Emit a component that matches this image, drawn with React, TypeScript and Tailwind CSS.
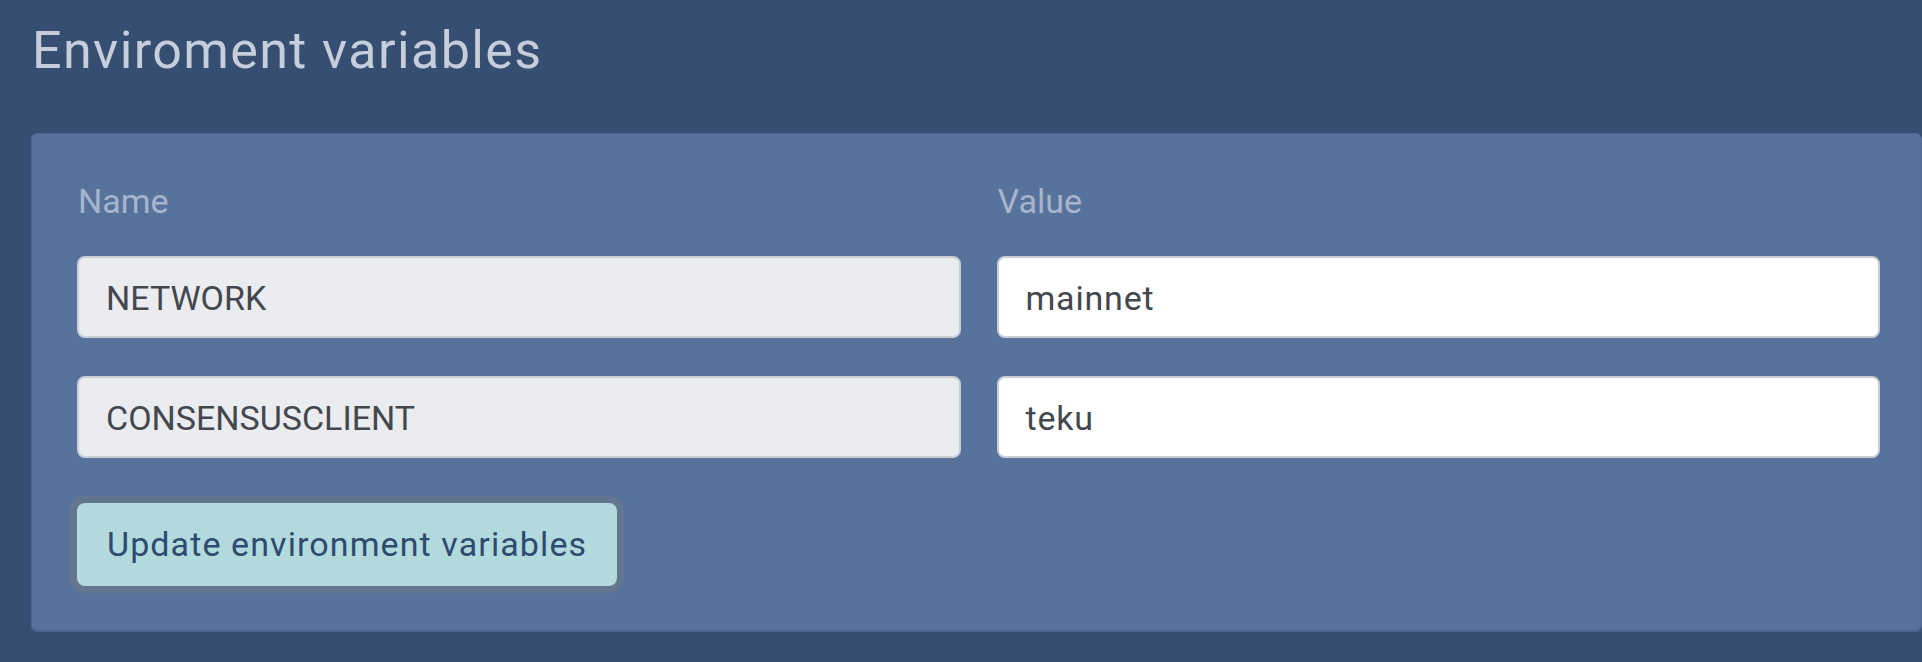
const font = { fontFamily: 'Roboto, "Liberation Sans", sans-serif' };

const rows = [
  { name: 'NETWORK', value: 'mainnet' },
  { name: 'CONSENSUSCLIENT', value: 'teku' },
];

export default function App() {
  return (
    <div className="min-h-screen w-full overflow-hidden bg-[#354e71] pl-[31px] pt-[26px]" style={font}>
      <h1 className="text-[52px] leading-[50px] font-normal tracking-[1.4px] text-[#c6cedb] pl-[1px]">
        Enviroment variables
      </h1>

      <div className="mt-[57px] w-[1891px] rounded-[6px] border border-[#4d6790] bg-[#57739b] pl-[45px] pr-[41px] pt-[50px] pb-[44px] shadow-[0_1px_0_#4a6287]">
        <div className="grid grid-cols-2 gap-x-[36px]">
          <div className="text-[34px] leading-[34px] text-[#a6b5cc] pl-[1px]">Name</div>
          <div className="text-[34px] leading-[34px] text-[#a6b5cc] pl-[1px]">Value</div>
        </div>

        <div className="mt-[38px] flex flex-col gap-[38px]">
          {rows.map((row) => (
            <div key={row.name} className="grid grid-cols-2 gap-x-[36px]">
              <div className="flex h-[82px] items-center rounded-[8px] border-2 border-[#c9ced6] bg-[#eaecf0] pl-[27px] pt-[2px] text-[34px] text-[#44474d]">
                {row.name}
              </div>
              <div className="flex h-[82px] items-center rounded-[8px] border-2 border-[#c9ced6] bg-white pl-[27px] pt-[2px] text-[34px] tracking-[0.8px] text-[#44474d]">
                {row.value}
              </div>
            </div>
          ))}
        </div>

        <div className="mt-[45px] flex">
          <button className="flex h-[83px] items-center rounded-[8px] bg-[#b2dadd] px-[30px] text-[34px] tracking-[1.1px] text-[#2e4a70] ring-[7px] ring-[#64758f]">
            Update environment variables
          </button>
        </div>
      </div>
    </div>
  );
}
